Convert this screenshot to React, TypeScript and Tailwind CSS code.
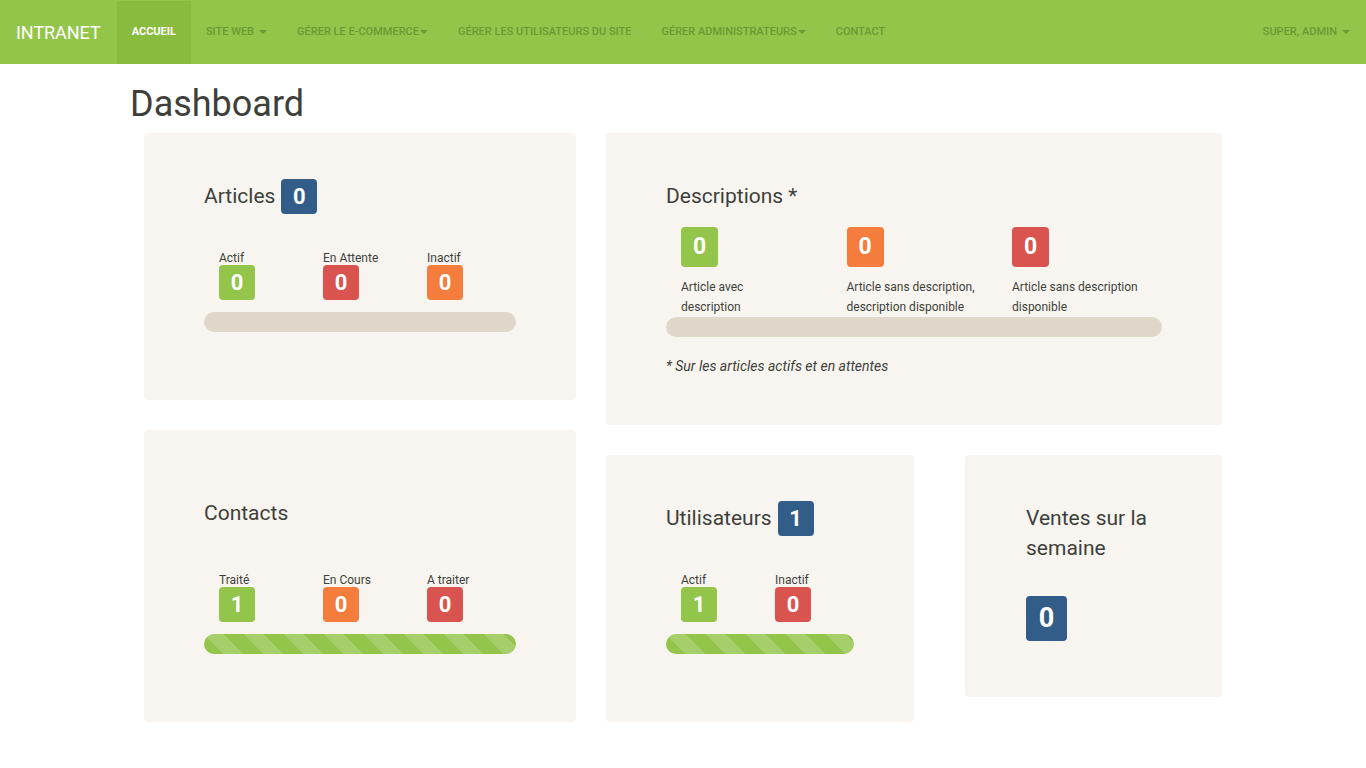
import React from 'react';

type Tone = 'green' | 'red' | 'orange' | 'blue';

const toneClass: Record<Tone, string> = {
  green: 'bg-[#93c54b]',
  red: 'bg-[#d9534f]',
  orange: 'bg-[#f47c3c]',
  blue: 'bg-[#325d88]',
};

const Badge: React.FC<{ value: number; tone: Tone; big?: boolean; tall?: boolean }> = ({ value, tone, big, tall }) => (
  <span
    className={`${toneClass[tone]} inline-flex items-center justify-center rounded-[4px] font-bold text-white ${
      big ? 'w-[41px] h-[45px] text-[27px]' : tall ? 'w-[37px] h-[40px] text-[23px]' : 'w-[36px] h-[35px] text-[22px]'
    }`}
  >
    {value}
  </span>
);

const Bar: React.FC<{ striped?: boolean }> = ({ striped }) =>
  striped ? (
    <div className="h-[20px] rounded-full bg-[#93c54b] bg-[linear-gradient(45deg,rgba(255,255,255,.18)_25%,transparent_25%,transparent_50%,rgba(255,255,255,.18)_50%,rgba(255,255,255,.18)_75%,transparent_75%,transparent)] bg-[length:40px_40px]" />
  ) : (
    <div className="h-[20px] rounded-full bg-[#dfd7ca]" />
  );

const Stat: React.FC<{ label: string; value: number; tone: Tone; width: string }> = ({ label, value, tone, width }) => (
  <div className={`${width} shrink-0 flex flex-col`}>
    <span className="text-[12px] leading-[14px]">{label}</span>
    <Badge value={value} tone={tone} />
  </div>
);

const Card: React.FC<{ className: string; children: React.ReactNode }> = ({ className, children }) => (
  <div className={`bg-[#f8f5f0] rounded-[4px] px-[60px] ${className}`}>{children}</div>
);

const navItems = [
  { label: 'SITE WEB', caret: true },
  { label: 'GÉRER LE E-COMMERCE', caret: true, tight: true },
  { label: 'GÉRER LES UTILISATEURS DU SITE' },
  { label: 'GÉRER ADMINISTRATEURS', caret: true, tight: true },
  { label: 'CONTACT' },
];

const Caret: React.FC<{ tight?: boolean }> = ({ tight }) => (
  <span className={`inline-block w-0 h-0 border-x-[4px] border-x-transparent border-t-[4px] border-t-current align-middle ${tight ? 'ml-[1px]' : 'ml-[5px]'}`} />
);

export default function App() {
  return (
    <div className="min-h-screen bg-white text-[#3e3f3a]" style={{ fontFamily: 'Roboto, "Liberation Sans", sans-serif' }}>
      {/* Navbar */}
      <nav className="h-[64px] bg-[#93c54b] flex items-stretch">
        <div className="pl-[16px] pr-[16px] flex items-center text-white text-[18px] tracking-[-0.05px]">INTRANET</div>
        <div className="flex items-stretch text-[11px] font-medium">
          <div className="px-[15px] flex items-center bg-[#88bb3e] text-white font-bold mt-[1px]">ACCUEIL</div>
          {navItems.map((item) => (
            <div key={item.label} className="px-[15px] flex items-center text-[#6a9a32]">
              {item.label}
              {item.caret && <Caret tight={item.tight} />}
            </div>
          ))}
        </div>
        <div className="ml-auto pr-[16px] flex items-center text-[11px] font-medium text-[#6a9a32]">
          SUPER, ADMIN
          <Caret />
        </div>
      </nav>

      <div className="w-[1110px] mx-auto">
        <h1 className="text-[36px] leading-[40px] mt-[20px] mb-[9px] pl-[2px]">Dashboard</h1>
        <div className="pl-[16px] flex gap-[30px] items-start">
          {/* Left column */}
          <div className="w-[432px] flex flex-col gap-[30px]">
            <Card className="h-[267px] pt-[46px]">
              <div className="flex items-center gap-[6px] h-[35px]">
                <span className="text-[21px]">Articles</span>
                <Badge value={0} tone="blue" />
              </div>
              <div className="flex pl-[15px] mt-[37px]">
                <Stat label="Actif" value={0} tone="green" width="w-[104px]" />
                <Stat label="En Attente" value={0} tone="red" width="w-[104px]" />
                <Stat label="Inactif" value={0} tone="orange" width="w-[104px]" />
              </div>
              <div className="mt-[12px]">
                <Bar />
              </div>
            </Card>

            <Card className="h-[292px] pt-[66px]">
              <div className="flex items-center h-[35px]">
                <span className="text-[21px]">Contacts</span>
              </div>
              <div className="flex pl-[15px] mt-[42px]">
                <Stat label="Traité" value={1} tone="green" width="w-[104px]" />
                <Stat label="En Cours" value={0} tone="orange" width="w-[104px]" />
                <Stat label="A traiter" value={0} tone="red" width="w-[104px]" />
              </div>
              <div className="mt-[12px]">
                <Bar striped />
              </div>
            </Card>
          </div>

          {/* Right column */}
          <div className="w-[616px] flex flex-col gap-[30px]">
            <Card className="h-[292px] pt-[46px]">
              <div className="flex items-center h-[35px]">
                <span className="text-[21px]">Descriptions *</span>
              </div>
              <div className="flex pl-[15px] mt-[13px]">
                {[
                  { tone: 'green' as Tone, text: ['Article avec', 'description'] },
                  { tone: 'orange' as Tone, text: ['Article sans description,', 'description disponible'] },
                  { tone: 'red' as Tone, text: ['Article sans description', 'disponible'] },
                ].map((d, i) => (
                  <div key={i} className="w-[165.5px] shrink-0 flex flex-col">
                    <Badge value={0} tone={d.tone} tall />
                    <div className="mt-[10px] text-[12px] leading-[20px]">
                      {d.text[0]}
                      <br />
                      {d.text[1]}
                    </div>
                  </div>
                ))}
              </div>
              <Bar />
              <p className="mt-[19px] text-[14px] leading-[20px] italic">* Sur les articles actifs et en attentes</p>
            </Card>

            <div className="flex gap-[51px] items-start">
              <Card className="w-[308px] h-[267px] pt-[46px]">
                <div className="flex items-center gap-[6px] h-[35px]">
                  <span className="text-[21px]">Utilisateurs</span>
                  <Badge value={1} tone="blue" />
                </div>
                <div className="flex pl-[15px] mt-[37px]">
                  <Stat label="Actif" value={1} tone="green" width="w-[94px]" />
                  <Stat label="Inactif" value={0} tone="red" width="w-[94px]" />
                </div>
                <div className="mt-[12px]">
                  <Bar striped />
                </div>
              </Card>

              <Card className="w-[257px] h-[242px] pt-[48px] pl-[61px]">
                <div className="text-[21px] leading-[30px]">
                  Ventes sur la
                  <br />
                  semaine
                </div>
                <div className="mt-[33px]">
                  <Badge value={0} tone="blue" big />
                </div>
              </Card>
            </div>
          </div>
        </div>
      </div>
    </div>
  );
}
